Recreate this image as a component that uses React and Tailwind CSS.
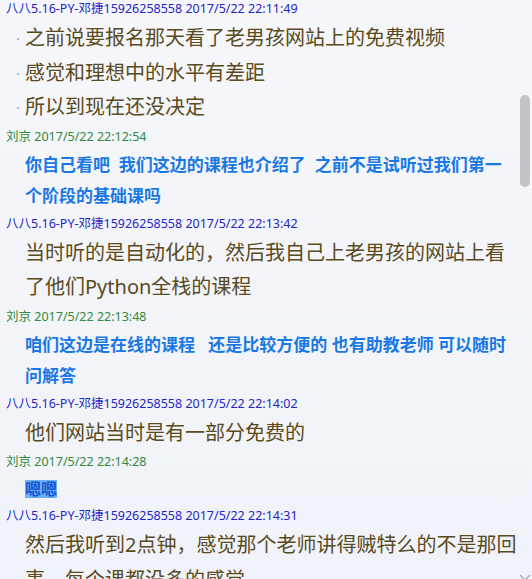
import React from 'react';

const messages = [
  { who: 'student', time: '2017/5/22 22:11:49', kind: 'olive', dots: true,
    lines: ['之前说要报名那天看了老男孩网站上的免费视频', '感觉和理想中的水平有差距', '所以到现在还没决定'] },
  { who: 'teacher', time: '2017/5/22 22:12:54', kind: 'blue',
    lines: ['你自己看吧\u00a0\u00a0我们这边的课程也介绍了\u00a0\u00a0之前不是试听过我们第一', '个阶段的基础课吗'] },
  { who: 'student', time: '2017/5/22 22:13:42', kind: 'olive',
    lines: ['当时听的是自动化的，然后我自己上老男孩的网站上看', '了他们Python全栈的课程'] },
  { who: 'teacher', time: '2017/5/22 22:13:48', kind: 'blue',
    lines: ['咱们这边是在线的课程\u00a0\u00a0\u00a0还是比较方便的 也有助教老师 可以随时', '问解答'] },
  { who: 'student', time: '2017/5/22 22:14:02', kind: 'olive',
    lines: ['他们网站当时是有一部分免费的'] },
  { who: 'teacher', time: '2017/5/22 22:14:28', kind: 'mark', lines: ['嗯嗯'] },
  { who: 'student', time: '2017/5/22 22:14:31', kind: 'olive',
    lines: ['然后我听到2点钟，感觉那个老师讲得贼特么的不是那回', '事，每个课都没多的感觉'] },
];

const Header = ({ who, time }) => (
  <div
    className={`pl-[6px] text-[12.5px] leading-[24px] whitespace-nowrap ${
      who === 'student' ? 'text-[#2424c8]' : 'text-[#2f8a3c]'
    }`}
  >
    {who === 'student' ? '八八5.16-PY-邓捷15926258558' : '刘京'} {time}
  </div>
);

const Message = ({ m }) => {
  if (m.kind === 'mark') {
    return (
      <div className="pl-[25px] text-[16px] font-bold leading-[30px]">
        <span className="inline-block bg-[#72b0f4] leading-[18px] text-[#1257d8]">{m.lines[0]}</span>
      </div>
    );
  }
  const style =
    m.kind === 'olive'
      ? 'text-[20px] leading-[34.5px] text-[#5a4a1c]'
      : 'text-[17px] font-bold leading-[31.5px] text-[#1a78e6]';
  return (
    <div className={`whitespace-nowrap ${style}`}>
      {m.lines.map((l) => (
        <div key={l} className="flex">
          <span className="w-[25px] shrink-0 pr-[5px] text-right text-[15px] text-[#a5a5a5]">
            {m.dots ? '·' : ''}
          </span>
          <span>{l}</span>
        </div>
      ))}
    </div>
  );
};

export default function App() {
  return (
    <div
      className="flex h-[579px] w-[532px] overflow-hidden bg-gradient-to-b from-[#f6f7fb] to-[#f0f3f9]"
      style={{ fontFamily: '"Noto Sans", "Noto Sans CJK SC", sans-serif' }}
    >
      <div className="mt-[-3px] min-w-0 flex-1">
        {messages.map((m, i) => (
          <div key={i}>
            <Header who={m.who} time={m.time} />
            <Message m={m} />
          </div>
        ))}
      </div>
      <div className="flex w-[14px] shrink-0 flex-col items-center">
        <div className="mt-[95px] h-[92px] w-[10px] rounded-[5px] bg-[#c2c4c9]" />
        <svg className="mt-auto mb-[-3px]" width="12" height="9" viewBox="0 0 12 9">
          <path d="M1 2 L6 7 L11 2" fill="none" stroke="#a0a3a8" strokeWidth="1.2" />
        </svg>
      </div>
    </div>
  );
}
